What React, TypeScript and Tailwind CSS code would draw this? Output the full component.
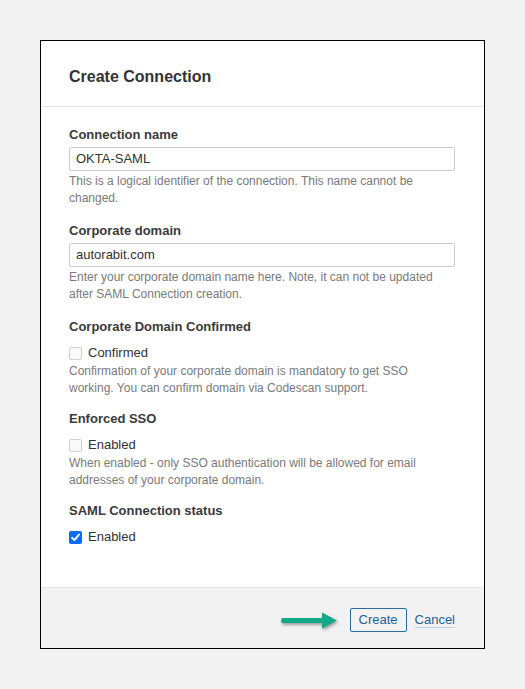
import React from "react";

function Box({ checked }: { checked?: boolean }) {
    if (checked) {
        return (
            <span className="inline-flex items-center justify-center w-[13px] h-[13px] rounded-[2px] bg-[#0a6cff] shrink-0">
                <svg width="11" height="11" viewBox="0 0 12 12" fill="none">
                    <path d="M2.2 6.3 L4.8 8.8 L9.8 2.8" stroke="#fff" strokeWidth="2" strokeLinecap="round" strokeLinejoin="round" />
                </svg>
            </span>
        );
    }
    return <span className="inline-block w-[13px] h-[13px] rounded-[2px] border border-[#cfcfcf] bg-[#fafafa] shrink-0" />;
}

function Label({ children }: { children: React.ReactNode }) {
    return <div className="text-[13px] leading-[18px] font-bold text-[#3a3a3a]">{children}</div>;
}

function Help({ children }: { children: React.ReactNode }) {
    return <div className="text-[12px] leading-[17px] text-[#7a7a7a]">{children}</div>;
}

function TextField({ label, value, help }: { label: string; value: string; help: string }) {
    return (
        <div className="mb-[15px]">
            <Label>{label}</Label>
            <div className="mt-[3px] mb-[2px] h-[24px] border border-[#ccc] rounded-[2px] px-[6px] flex items-center text-[13px] text-[#333]">
                {value}
            </div>
            <Help>{help}</Help>
        </div>
    );
}

function CheckField({ label, text, checked, help }: { label: string; text: string; checked?: boolean; help?: string }) {
    return (
        <div className="mb-[13px]">
            <Label>{label}</Label>
            <div className="mt-[7px] h-[20px] flex items-center gap-[6px] text-[13px] text-[#333]">
                <Box checked={checked} />
                <span>{text}</span>
            </div>
            {help && <Help>{help}</Help>}
        </div>
    );
}

export default function App() {
    return (
        <div className="min-h-[689px] bg-[#f2f2f2] pt-[40px] pl-[40px] font-['Liberation_Sans',Arial,sans-serif]">
            <div className="w-[445px] h-[609px] border border-black bg-white flex flex-col">
                {/* Header */}
                <div className="h-[66px] border-b border-[#e6e6e6] px-[28px] flex items-center">
                    <h2 className="text-[16px] font-bold text-[#333] mt-[6px]">Create Connection</h2>
                </div>

                {/* Body */}
                <div className="flex-1 pl-[28px] pr-[29px] pt-[19px]">
                    <TextField
                        label="Connection name"
                        value="OKTA-SAML"
                        help="This is a logical identifier of the connection. This name cannot be changed."
                    />
                    <TextField
                        label="Corporate domain"
                        value="autorabit.com"
                        help="Enter your corporate domain name here. Note, it can not be updated after SAML Connection creation."
                    />
                    <CheckField
                        label="Corporate Domain Confirmed"
                        text="Confirmed"
                        help="Confirmation of your corporate domain is mandatory to get SSO working. You can confirm domain via Codescan support."
                    />
                    <CheckField
                        label="Enforced SSO"
                        text="Enabled"
                        help="When enabled - only SSO authentication will be allowed for email addresses of your corporate domain."
                    />
                    <CheckField label="SAML Connection status" text="Enabled" checked />
                </div>

                {/* Footer */}
                <div className="h-[61px] bg-[#f2f2f2] border-t border-[#e6e6e6] flex items-center justify-end pr-[29px] pt-[4px] gap-[8px]">
                    <svg width="64" height="24" viewBox="0 0 64 24" className="mt-[2px]" style={{ filter: "drop-shadow(1px 2px 1.5px rgba(0,0,0,0.35))" }}>
                        <path d="M4 9 H44 V3.5 L59 11.5 L44 19.5 V14 H4 Q2 11.5 4 9 Z" fill="#10aa8a" />
                    </svg>
                    <button className="h-[24px] px-[8px] border border-[#2b6a9a] rounded-[2px] bg-transparent text-[13px] text-[#236394]">
                        Create
                    </button>
                    <span className="text-[13px] text-[#236394] border-b border-[#b8d3ea] leading-[15px]">Cancel</span>
                </div>
            </div>
        </div>
    );
}
